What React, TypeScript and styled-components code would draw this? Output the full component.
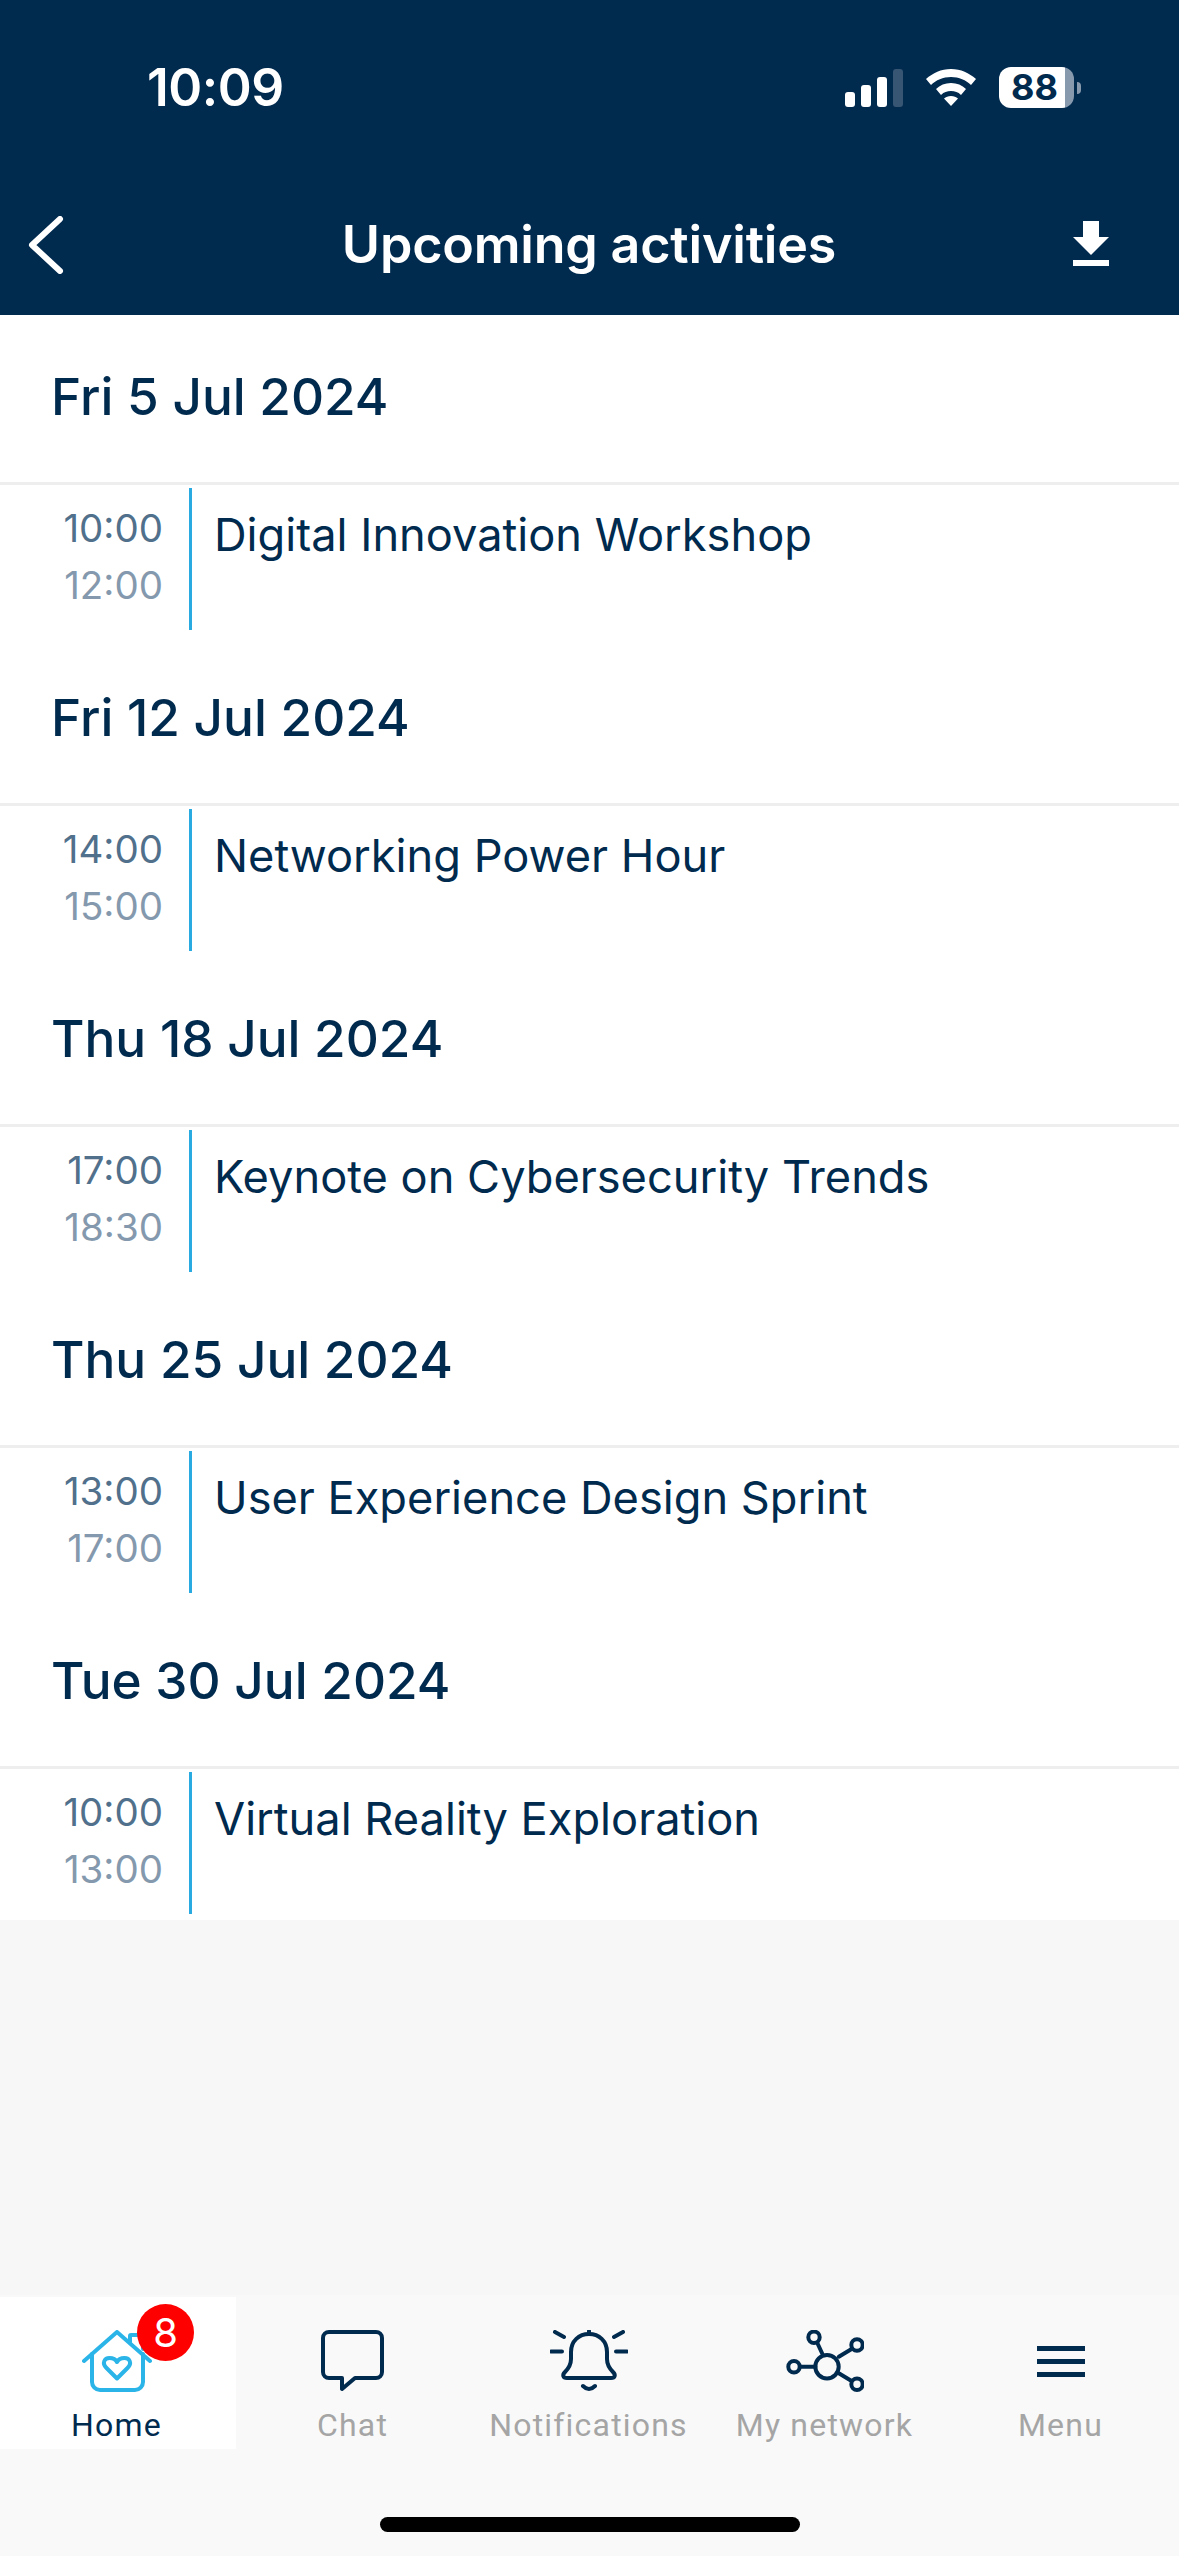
import React from 'react';
import styled, { createGlobalStyle } from 'styled-components';

const navy = '#002a4e';
const sky = '#29abe2';

const Global = createGlobalStyle`
  html, body { margin: 0; padding: 0; background: #f7f7f7; }
  * { box-sizing: border-box; }
`;

const Page = styled.div`
  width: 1179px;
  height: 2556px;
  display: flex;
  flex-direction: column;
  font-family: Inter, "Liberation Sans", sans-serif;
  color: ${navy};
  overflow: hidden;
`;

const Header = styled.header`
  height: 315px;
  background: ${navy};
  color: #fff;
  display: flex;
  flex-direction: column;
`;

const StatusBar = styled.div`
  height: 175px;
  display: flex;
  align-items: center;
  justify-content: space-between;
  padding: 0 98px 0 147px;
`;

const Clock = styled.div`
  font-size: 51.500px;
  font-weight: 600;
  letter-spacing: -0.5px;
  line-height: 1;
`;

const StatusIcons = styled.div`
  display: flex;
  align-items: center;
  gap: 23px;
`;

const Battery = styled.div`
  width: 82px;
  height: 41px;
  display: flex;
  align-items: center;
`;

const BatteryBody = styled.div`
  width: 75px;
  height: 41px;
  border-radius: 12px;
  background: linear-gradient(90deg, #fff 0 88%, #8699ad 88% 100%);
  color: ${navy};
  font-size: 36px;
  font-weight: 700;
  line-height: 41px;
  padding-left: 12px;
`;

const BatteryNub = styled.div`
  width: 4px;
  height: 12px;
  margin-left: 3px;
  border-radius: 0 6px 6px 0;
  background: #8699ad;
`;

const NavBar = styled.div`
  height: 140px;
  display: flex;
  align-items: center;
  padding: 0 70px 0 28px;
`;

const NavTitle = styled.h1`
  flex: 1;
  margin: 0;
  padding-left: 41px;
  text-align: center;
  font-size: 52px;
  line-height: 56px;
  font-weight: 600;
  letter-spacing: -0.2px;
`;

const DownloadButton = styled.div`
  margin-bottom: 3px;
`;

const List = styled.main`
  background: #fff;
`;

const DateHeader = styled.h2`
  height: 170px;
  margin: 0;
  padding: 0 0 5px 51px;
  display: flex;
  align-items: center;
  border-bottom: 3px solid #eeeeee;
  font-size: 51.300px;
  font-weight: 500;
`;

const EventRow = styled.div`
  display: flex;
  padding: 3px 0 6px;
`;

const Times = styled.div`
  width: 163px;
  height: 142px;
  text-align: right;
  font-size: 38.500px;
  line-height: 57px;
  padding-top: 12px;
`;

const Time = styled.div<{ $end?: boolean }>`
  color: ${p => (p.$end ? '#8499ad' : '#50708c')};
`;

const Rule = styled.div`
  width: 3px;
  height: 142px;
  margin: 0 22px 0 26px;
  background: ${sky};
`;

const EventTitle = styled.div`
  font-size: 45.200px;
  line-height: 54px;
  padding-top: 20px;
`;

const Spacer = styled.div`
  flex: 1;
`;

const TabArea = styled.nav`
  height: 261px;
  background: #f9f9f9;
  padding-top: 2px;
`;

const Tabs = styled.div`
  display: grid;
  grid-template-columns: repeat(5, 236px);
`;

const Tab = styled.div<{ $active?: boolean }>`
  height: 152px;
  position: relative;
  display: flex;
  flex-direction: column;
  align-items: center;
  padding: 32px 3px 0 0;
  background: ${p => (p.$active ? '#fff' : 'transparent')};
  color: ${p => (p.$active ? navy : '#a5a5a5')};
`;

const IconSlot = styled.div`
  height: 64px;
  display: flex;
  align-items: center;
  justify-content: center;
`;

const TabLabel = styled.div`
  margin-top: 14px;
  font-family: Roboto, "Liberation Sans", sans-serif;
  font-size: 32px;
  line-height: 36px;
  letter-spacing: 1.200px;
  white-space: nowrap;
`;

const Badge = styled.div`
  position: absolute;
  left: 137px;
  top: 7px;
  width: 57px;
  height: 57px;
  border-radius: 50%;
  background: #ff0000;
  color: #fff;
  font-size: 40px;
  line-height: 57px;
  text-align: center;
`;

const HomeBar = styled.div`
  width: 420px;
  height: 15px;
  margin: 68px 0 0 380px;
  border-radius: 8px;
  background: #000;
`;

const Stroke = styled.svg`
  fill: none;
  stroke: ${navy};
  stroke-width: 4;
  stroke-linecap: round;
  stroke-linejoin: round;
  display: block;
`;

const HomeStroke = styled(Stroke)`
  stroke: #2ab4e8;
`;

const schedule = [
  { date: 'Fri 5 Jul 2024', start: '10:00', end: '12:00', title: 'Digital Innovation Workshop' },
  { date: 'Fri 12 Jul 2024', start: '14:00', end: '15:00', title: 'Networking Power Hour' },
  { date: 'Thu 18 Jul 2024', start: '17:00', end: '18:30', title: 'Keynote on Cybersecurity Trends' },
  { date: 'Thu 25 Jul 2024', start: '13:00', end: '17:00', title: 'User Experience Design Sprint' },
  { date: 'Tue 30 Jul 2024', start: '10:00', end: '13:00', title: 'Virtual Reality Exploration' },
];

const SignalIcon = () => (
  <svg width="58" height="38" viewBox="0 0 58 38">
    <rect x="0" y="23" width="10" height="15" rx="3" fill="#fff" />
    <rect x="16" y="16" width="10" height="22" rx="3" fill="#fff" />
    <rect x="32" y="8" width="10" height="30" rx="3" fill="#fff" />
    <rect x="48" y="0" width="10" height="38" rx="3" fill="#365673" />
  </svg>
);

const WifiIcon = () => (
  <svg width="50" height="37" viewBox="0 0 50 37">
    <path d="M25 0C15 0 7 4 0 10l5 6c5-5 12-8 20-8s15 3 20 8l5-6C43 4 35 0 25 0z" fill="#fff" />
    <path d="M25 14c-6 0-11 2-15 6l5 6c3-3 6-4 10-4s7 1 10 4l5-6c-4-4-9-6-15-6z" fill="#fff" />
    <path d="M25 27c-3 0-5 1-7 2.500L25 37l7-7.500C30 28 28 27 25 27z" fill="#fff" />
  </svg>
);

const BackIcon = () => (
  <svg width="36" height="58" viewBox="0 0 36 58" fill="none" stroke="#fff" strokeWidth="6" strokeLinecap="round" strokeLinejoin="round">
    <path d="M32 3L4 29l28 26" />
  </svg>
);

const DownloadIcon = () => (
  <svg width="36" height="45" viewBox="0 0 36 45" fill="#fff" style={{ display: 'block' }}>
    <path d="M10 0h16v16h10L18 34 0 16h10z" />
    <rect x="0" y="39" width="36" height="6" />
  </svg>
);

const HomeIcon = () => (
  <HomeStroke width="70" height="62" viewBox="0 0 70 62">
    <path d="M2 31L35 2l33 29" />
    <path d="M10 24v28a8 8 0 0 0 8 8h35a8 8 0 0 0 8-8V24" />
    <path d="M48 12V6q0-1 1-1h12v14" />
    <path d="M35 48.500L24.500 38c-5-5-2-10 3-10 3 0 6 1 7.500 4 1.500-3 4.500-4 7.500-4 5 0 8 5 3 10z" />
  </HomeStroke>
);

const ChatIcon = () => (
  <Stroke width="63" height="62" viewBox="0 0 63 62">
    <path d="M8 2h47a6 6 0 0 1 6 6v34a6 6 0 0 1-6 6H34L21 59V48H8a6 6 0 0 1-6-6V8a6 6 0 0 1 6-6z" />
  </Stroke>
);

const BellIcon = () => (
  <Stroke width="78" height="62" viewBox="0 0 78 62">
    <path d="M39 4c-10 0-18 7-18 18v7c0 6-3 10-6 13-3 3-2 6 2 6h44c4 0 5-3 2-6-3-3-6-7-6-13v-7c0-11-8-18-18-18z" />
    <path d="M39 1v3M33 56q6 6 12 0" />
    <path d="M5 2l9 5M1 21.500h11M73 2l-9 5M77 21.500H66" />
  </Stroke>
);

const NetworkIcon = () => (
  <Stroke width="78" height="62" viewBox="0 0 78 62">
    <circle cx="41" cy="36.700" r="11.700" />
    <circle cx="28" cy="7.300" r="5.700" />
    <circle cx="71" cy="15" r="5.700" />
    <circle cx="8" cy="36.700" r="5.700" />
    <circle cx="71" cy="54.300" r="5.700" />
    <path d="M31.800 14l4.400 9.500M52.800 26.700l12.400-7.400M14.500 36.700h15M52.800 43.300l12.400 7.400" />
  </Stroke>
);

const MenuIcon = () => (
  <svg width="48" height="31" viewBox="0 0 48 31" fill={navy}>
    <rect y="0" width="48" height="5" />
    <rect y="13" width="48" height="5" />
    <rect y="26" width="48" height="5" />
  </svg>
);

function App() {
  return (
    <Page>
      <Global />
      <Header>
        <StatusBar>
          <Clock>10:09</Clock>
          <StatusIcons>
            <SignalIcon />
            <WifiIcon />
            <Battery>
              <BatteryBody>88</BatteryBody>
              <BatteryNub />
            </Battery>
          </StatusIcons>
        </StatusBar>
        <NavBar>
          <BackIcon />
          <NavTitle>Upcoming activities</NavTitle>
          <DownloadButton><DownloadIcon /></DownloadButton>
        </NavBar>
      </Header>
      <List>
        {schedule.map(item => (
          <section key={item.date}>
            <DateHeader>{item.date}</DateHeader>
            <EventRow>
              <Times>
                <Time>{item.start}</Time>
                <Time $end>{item.end}</Time>
              </Times>
              <Rule />
              <EventTitle>{item.title}</EventTitle>
            </EventRow>
          </section>
        ))}
      </List>
      <Spacer />
      <TabArea>
        <Tabs>
          <Tab $active>
            <IconSlot><HomeIcon /></IconSlot>
            <TabLabel>Home</TabLabel>
            <Badge>8</Badge>
          </Tab>
          <Tab>
            <IconSlot><ChatIcon /></IconSlot>
            <TabLabel>Chat</TabLabel>
          </Tab>
          <Tab>
            <IconSlot><BellIcon /></IconSlot>
            <TabLabel>Notifications</TabLabel>
          </Tab>
          <Tab>
            <IconSlot><NetworkIcon /></IconSlot>
            <TabLabel>My network</TabLabel>
          </Tab>
          <Tab>
            <IconSlot><MenuIcon /></IconSlot>
            <TabLabel>Menu</TabLabel>
          </Tab>
        </Tabs>
        <HomeBar />
      </TabArea>
    </Page>
  );
}

export default App;
